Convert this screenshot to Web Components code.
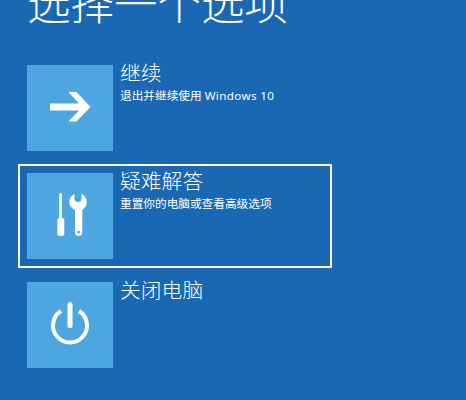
<!DOCTYPE html>
<html lang="zh-CN">
<head>
<meta charset="utf-8">
<title>选择一个选项</title>
<style>
html, body { margin: 0; height: 100%; overflow: hidden; background: #1a67b3; }
body { font-family: "Noto Sans", "Noto Sans CJK SC", sans-serif; color: #fff; }
.latin { letter-spacing: 0.35px; }
</style>
</head>
<body>
<option-screen heading="选择一个选项">
	<option-row label="继续">
		<svg viewBox="0 0 86 86" width="86" height="86"><polygon points="41.500,27 49.500,27 63.500,42 49.500,56.500 41.500,56.500 52,45.500 23,45.500 23,38.500 52,38.500" fill="#fff"/></svg>
		<span slot="note">退出并继续使用 <span class="latin">Windows 10</span></span>
	</option-row>
	<option-row label="疑难解答" selected>
		<svg viewBox="0 0 86 86" width="86" height="86">
			<path fill="#fff" d="M32 21.500a1.500 1.500 0 0 1 3 0V45h.3q2 0 2 2V60.500a2.500 2.500 0 0 1-2.500 2.500h-2a2.500 2.500 0 0 1-2.500-2.500V47q0-2 1.700-2H32Z"/>
			<path fill="#fff" fill-rule="evenodd" d="M47.500 21V25.500a3.500 3.500 0 0 0 7 0V21C57.800 22.300 59.700 25.500 59.700 29C59.700 32.500 57.800 35.500 55.300 37V59.300a3.650 3.650 0 0 1-7.300 0V37C44.200 35.500 42.300 32.500 42.300 29C42.300 25.500 44.200 22.300 47.500 21ZM51.650 57.700a1.400 1.400 0 1 0 .01 0Z"/>
		</svg>
		<span slot="note">重置你的电脑或查看高级选项</span>
	</option-row>
	<option-row label="关闭电脑">
		<svg viewBox="0 0 86 86" width="86" height="86"><path d="M34 29a17 17 0 1 0 18 0" fill="none" stroke="#fff" stroke-width="4"/><path d="M43 22.500V43.500" fill="none" stroke="#fff" stroke-width="5" stroke-linecap="round"/></svg>
	</option-row>
</option-screen>

<script>
// page frame: big heading on top, the list of options under it
class OptionScreen extends HTMLElement {
	constructor() {
		super();
		this.shadowEl = this.attachShadow({mode:'open'});
		this.shadowEl.innerHTML = `
		<style>
		:host {
			display: block;
			padding-left: 18px;
		}
		h1 {
			margin: -24px 0 0 9px;
			font-size: 43.500px;
			line-height: 54px;
			font-weight: 300;
			white-space: nowrap;
		}
		.list {
			display: flex;
			flex-direction: column;
			align-items: flex-start;
			gap: 4.700px;
			margin-top: 25.500px;
			width: 314px;
		}
		</style>
		<h1></h1>
		<div class="list"><slot></slot></div>`;
		this.shadowEl.querySelector('h1').textContent = this.getAttribute('heading');
	}
}

// one option: blue tile with an icon, label and optional note next to it
class OptionRow extends HTMLElement {
	constructor() {
		super();
		this.shadowEl = this.attachShadow({mode:'open'});
		this.shadowEl.innerHTML = `
		<style>
		:host {
			display: flex;
			box-sizing: border-box;
			width: 314px;
			height: 104px;
			padding: 7px 7px;
			border: 2px solid transparent;
			gap: 7px;
		}
		:host([selected]) {
			border-color: #fff;
		}
		.tile {
			flex: none;
			width: 86px;
			height: 86px;
			background: #4da6e0;
		}
		.text { display: flex; flex-direction: column; margin-top: -7px; }
		.label {
			font-size: 20.800px;
			line-height: 30px;
			font-weight: 300;
		}
		.note {
			font-size: 11.670px;
			line-height: 16px;
			white-space: nowrap;
		}
		</style>
		<div class="tile"><slot></slot></div>
		<div class="text"><span class="label"></span><span class="note"><slot name="note"></slot></span></div>`;
		this.shadowEl.querySelector('.label').textContent = this.getAttribute('label');
	}
}

customElements.define('option-screen', OptionScreen);
customElements.define('option-row', OptionRow);
</script>
</body>
</html>
